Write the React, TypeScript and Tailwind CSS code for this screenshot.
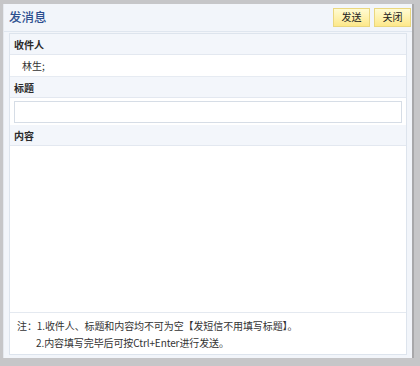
import React from 'react';

const font = { fontFamily: '"Noto Sans CJK SC", "Noto Sans", sans-serif' };

function YellowButton({ label }: { label: string }) {
    return (
        <button className="w-[37px] h-[19px] text-[10px] leading-none text-[#222] border border-[#ead77f] bg-gradient-to-b from-[#fffbd2] to-[#fde88a] flex items-center justify-center">
            {label}
        </button>
    );
}

function LabelRow({ text }: { text: string }) {
    return (
        <div className="h-[21px] bg-[#f3f6fb] border-b border-[#e3e8f0] pl-[4px] flex items-center text-[10px] font-bold text-[#2a2a2a]">
            {text}
        </div>
    );
}

export default function App() {
    return (
        <div style={font} className="w-[420px] h-[366px] bg-[#c6c6c8] pt-[4px] pl-[3px] pr-[6px] pb-[8px] flex">
            <div className="flex-1 flex flex-col bg-[#f2f5fa] border-l border-[#e4e8ee] border-r-[2px] border-r-[#a8a8aa]">
                {/* Header */}
                <div className="h-[28px] flex items-center justify-between pl-[5px] pr-[1px] border-b border-[#dfe6ef]">
                    <h1 className="text-[12.5px] font-medium text-[#2d4f8f] mt-[-1px]">发消息</h1>
                    <div className="flex gap-[4px] mt-[-1px]">
                        <YellowButton label="发送" />
                        <YellowButton label="关闭" />
                    </div>
                </div>

                {/* Body */}
                <div className="flex-1 mx-[5px] mt-[1px] mb-[3px] bg-white border border-[#dde4ed] flex flex-col">
                    <LabelRow text="收件人" />
                    <div className="h-[22px] flex items-center pl-[12px] text-[10px] text-[#333] border-b border-[#e6ebf2]">林生;</div>
                    <LabelRow text="标题" />
                    <div className="px-[4px] pt-[3px] pb-[2px]">
                        <input className="block w-full h-[22px] border border-[#d6dde6] outline-none text-[10px] px-1" />
                    </div>
                    <LabelRow text="内容" />
                    <textarea className="flex-1 resize-none outline-none text-[10px] p-1" />
                    <div className="border-t border-[#e4e9f0] pt-[4px] pb-[3px] pl-[7px] text-[10px] tracking-[-0.1px] leading-[17px] text-[#333]">
                        <p>注：1.收件人、标题和内容均不可为空【发短信不用填写标题】。</p>
                        <p className="pl-[19px]">2.内容填写完毕后可按Ctrl+Enter进行发送。</p>
                    </div>
                </div>
            </div>
        </div>
    );
}
